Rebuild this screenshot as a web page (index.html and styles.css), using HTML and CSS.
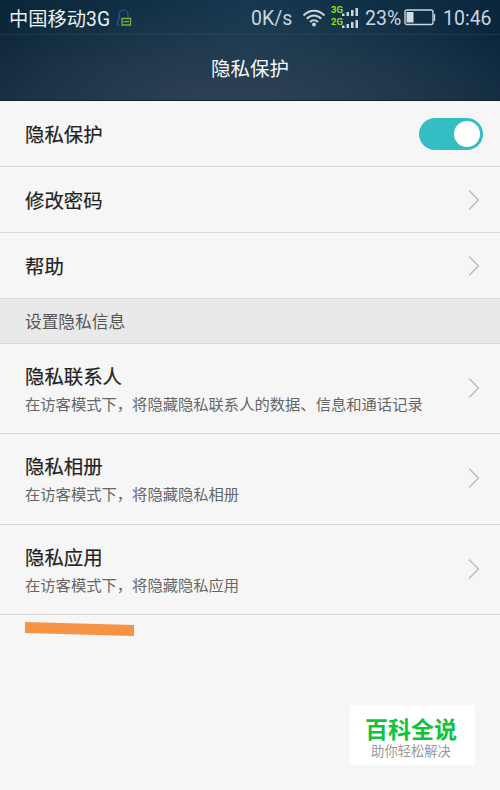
FILE: index.html
```html
<!DOCTYPE html>
<html lang="zh-CN">

<head>
 <meta charset="UTF-8">
 <meta name="viewport" content="width=device-width, initial-scale=1.0">
 <title>隐私保护</title>
 <link rel="stylesheet" href="styles.css">
</head>

<body>
 <header>
  <div class="status">
   <span class="carrier">中国移动3G</span>
   <svg class="lock" width="16" height="18" viewBox="0 0 16 18" fill="none">
    <path d="M3.500 16H1.500V13L3 10V6C3 3 5 1 7.500 1S12 3 12 6V8.500" stroke="#1d5ca5" stroke-width="1.200" />
    <path d="M6 9.500H14.500V16H6ZM7.500 12.700H13" stroke="#7fb02b" stroke-width="1.300" />
   </svg>
   <span class="speed">0K/s</span>
   <svg class="wifi" width="24" height="18" viewBox="0 0 24 18" fill="none" stroke="#c8d6df" stroke-width="2">
    <path d="M1.500 6.500C7.500 0 16.500 0 22.500 6.500M4.800 9.800C9 5.500 15 5.500 19.200 9.800M8 13C10.500 10.500 13.500 10.500 16 13" />
    <circle cx="12" cy="15.500" r="1.900" fill="#c8d6df" stroke="none" />
   </svg>
   <div class="networks">
    <div class="network"><span>3G</span>
     <svg width="17" height="10" viewBox="0 0 17 10" fill="#c8d6df">
      <path d="M0 7.500h2.500V10H0zM4.500 6h2.500v4H4.500zM9 4h2.500v6H9zM13.500 2h2.500v8H13.500z" />
     </svg>
    </div>
    <div class="network"><span>2G</span>
     <svg width="17" height="10" viewBox="0 0 17 10" fill="#c8d6df">
      <path d="M0 7.500h2.500V10H0zM4.500 6h2.500v4H4.500zM9 4h2.500v6H9zM13.500 2h2.500v8H13.500z" />
     </svg>
    </div>
   </div>
   <span class="percent">23%</span>
   <svg class="battery" width="32" height="17" viewBox="0 0 32 17" fill="none">
    <rect x="1" y="1" width="28" height="14.500" rx="2" stroke="#c8d6df" stroke-width="1.400" />
    <path d="M30 5h1.200v7H30z" fill="#c8d6df" />
    <path d="M2.500 3h7v10.500h-7z" fill="#d3dde2" />
   </svg>
   <span class="time">10:46</span>
  </div>
  <h1>隐私保护</h1>
 </header>

 <ul class="list">
  <li>
   <h2>隐私保护</h2>
   <span class="switch"></span>
  </li>
  <li>
   <h2>修改密码</h2>
   <svg class="arrow" width="12" height="20" viewBox="0 0 12 20"><path d="M1 .5L10.500 10L1 19.500" /></svg>
  </li>
  <li>
   <h2>帮助</h2>
   <svg class="arrow" width="12" height="20" viewBox="0 0 12 20"><path d="M1 .5L10.500 10L1 19.500" /></svg>
  </li>
 </ul>

 <h3 class="section">设置隐私信息</h3>

 <ul class="list details">
  <li>
   <div>
    <h2>隐私联系人</h2>
    <p>在访客模式下，将隐藏隐私联系人的数据、信息和通话记录</p>
   </div>
   <svg class="arrow" width="12" height="20" viewBox="0 0 12 20"><path d="M1 .5L10.500 10L1 19.500" /></svg>
  </li>
  <li>
   <div>
    <h2>隐私相册</h2>
    <p>在访客模式下，将隐藏隐私相册</p>
   </div>
   <svg class="arrow" width="12" height="20" viewBox="0 0 12 20"><path d="M1 .5L10.500 10L1 19.500" /></svg>
  </li>
  <li>
   <div>
    <h2>隐私应用</h2>
    <p>在访客模式下，将隐藏隐私应用</p>
   </div>
   <svg class="arrow" width="12" height="20" viewBox="0 0 12 20"><path d="M1 .5L10.500 10L1 19.500" /></svg>
  </li>
 </ul>

 <svg class="marker" width="110" height="16" viewBox="0 0 110 16">
  <path d="M0 0L109 3V14L0 11Z" fill="#f79345" />
 </svg>

 <div class="badge">
  <strong>百科全说</strong>
  <span>助你轻松解决</span>
 </div>
</body>

</html>
```
FILE: styles.css
```css
* {
 box-sizing: border-box;
}

body {
 margin: 0;
 height: 790px;
 overflow: hidden;
 background-color: #f6f6f6;
 font-family: Roboto, "Noto Sans CJK SC", sans-serif;
 color: #222;
}

h1, h2, h3, p, ul {
 margin: 0;
 padding: 0;
 font-weight: normal;
}

svg {
 display: block;
 flex: none;
}

header {
 height: 101px;
 background: radial-gradient(ellipse 360px 110px at 47% 110%, #304252, rgba(48, 66, 82, 0)), linear-gradient(90deg, #0b2638, #153850 50%, #0a263c);
 border-bottom: 1px solid #14222f;
}

.status {
 display: flex;
 align-items: center;
 height: 35px;
 padding: 1px 0 0 9px;
 border-bottom: 1px solid rgba(70, 105, 125, .25);
 color: #c8d6df;
 font-size: 19.500px;
 white-space: nowrap;
}

.status > span {
 padding-top: 1px;
}

.carrier {
 width: 101px;
 color: #e8f1f5;
 font-size: 19.300px;
}

.lock {
 margin-left: 6px;
}

.speed {
 width: 44px;
 margin-left: 119px;
}

.wifi {
 margin-left: 7px;
}

.networks {
 display: flex;
 flex-direction: column;
 gap: 2px;
 width: 28px;
 margin: -2px 0 0 5px;
}

.network {
 display: flex;
 align-items: flex-end;
 height: 10px;
}

.network span {
 width: 11px;
 color: #8fe01c;
 font-size: 9.500px;
 font-weight: bold;
 line-height: 13px;
}

.percent {
 width: 36px;
 margin-left: 6px;
}

.battery {
 margin-left: 3px;
}

.time {
 margin-left: 7px;
}

h1 {
 padding-top: 2px;
 color: #f6f9fb;
 font-size: 19.500px;
 line-height: 66px;
 text-align: center;
}

.list {
 list-style-type: none;
}

.list li {
 display: flex;
 align-items: center;
 justify-content: space-between;
 height: 66px;
 padding: 0 20px 0 25px;
 border-bottom: 1px solid #d9d9d9;
}

.list h2 {
 padding-top: 4px;
 font-size: 19.400px;
 line-height: 28px;
 -webkit-text-stroke: .2px #222;
}

.list .switch {
 width: 64px;
 height: 32px;
 margin-right: -3px;
 padding: 3px;
 border-radius: 16px;
 background-color: #34bec3;
}

.switch::after {
 content: "";
 display: block;
 width: 26px;
 height: 26px;
 margin-left: auto;
 border-radius: 50%;
 background-color: #fff;
}

.arrow path {
 fill: none;
 stroke: #b9b9b9;
 stroke-width: 1.300;
}

.section {
 height: 45px;
 padding: 1px 0 0 25px;
 border-bottom: 1px solid #d9d9d9;
 background-color: #e9e9e9;
 color: #555;
 font-size: 16.700px;
 line-height: 45px;
}

.details li {
 height: 90.300px;
}

.details h2 {
 padding-top: 6px;
}

.details p {
 color: #666;
 font-size: 15.300px;
 line-height: 27px;
}

.details .arrow {
 margin-bottom: 1px;
}

.marker {
 margin: 7px 0 0 25px;
}

/* floats over the bottom right corner */
.badge {
 position: absolute;
 right: 25px;
 bottom: 25px;
 display: flex;
 flex-direction: column;
 align-items: center;
 width: 125px;
 height: 60px;
 padding: 12px 3px 0 0;
 background-color: #fff;
}

.badge strong {
 color: #0fc43c;
 font-size: 23px;
 line-height: 27px;
}

.badge span {
 color: #999;
 font-size: 13.300px;
 line-height: 16px;
}
```
